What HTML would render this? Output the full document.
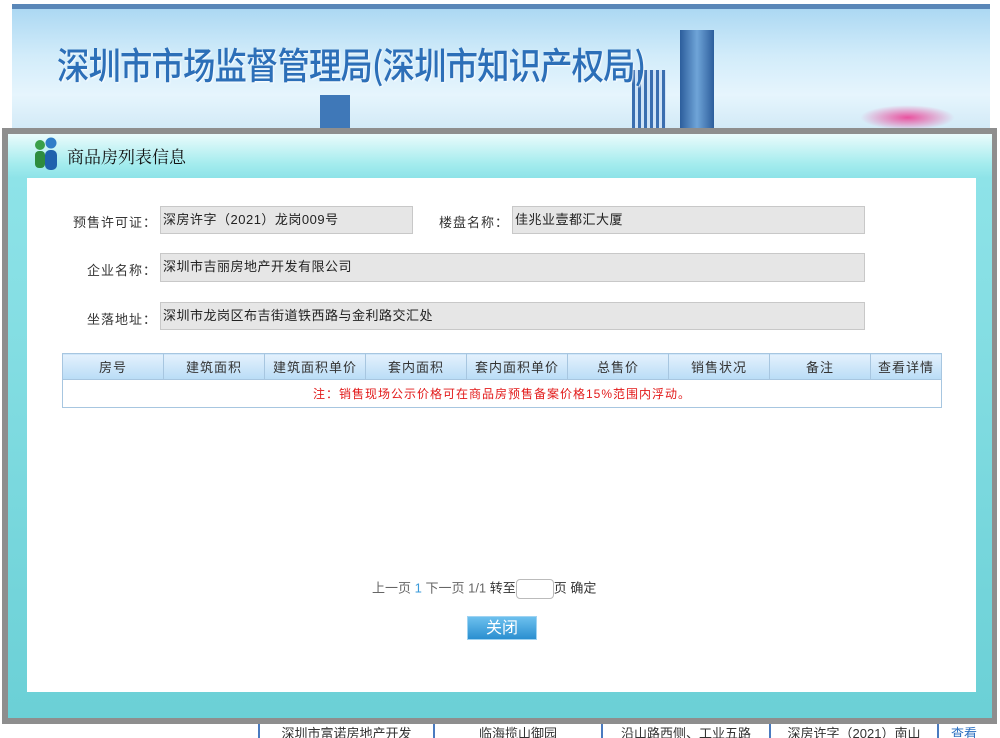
<!DOCTYPE html>
<html><head><meta charset="utf-8"><style>
*{margin:0;padding:0;box-sizing:border-box}
body{width:1000px;height:738px;overflow:hidden;background:#fff;position:relative;font-family:"Liberation Sans","Noto Sans CJK SC",sans-serif;font-size:13px;color:#333}
.abs{position:absolute}
.banner{left:12px;top:4px;width:978px;height:130px;background:linear-gradient(#a8d6f2 0%,#d2ecfa 40%,#e6f5fd 70%,#cfe8f6 100%);}
.bar{left:12px;top:4px;width:978px;height:5px;background:#5a87b8}
.btitle{left:57px;top:36px;font-size:37px;color:#2c6fb8;letter-spacing:-1px;font-family:"Noto Sans CJK SC",sans-serif;text-shadow:1px 1px 2px #fff;font-weight:500;transform:scaleX(0.875);transform-origin:0 0;white-space:nowrap}
.modal{left:2px;top:128px;width:995px;height:596px;background:#8e8e8e}
.inner{left:8px;top:134px;width:984px;height:584px;background:linear-gradient(#eafbfc 0px,#a4ecee 30px,#8ee3e8 44px,#6bd0d6 100%)}
.content{left:27px;top:178px;width:949px;height:514px;background:#fff}
.lbl{font-size:13px;color:#333;text-align:right;width:104px;letter-spacing:1px}
.inp{background:#e6e6e6;border:1px solid #c8c8c8;height:28px;line-height:26px;padding-left:2px;font-size:13px;color:#222;letter-spacing:0.5px}
table{border-collapse:collapse;position:absolute;left:62px;top:353px;width:880px}
th{height:26px;font-weight:normal;color:#333;font-size:13px;background:linear-gradient(#e4f1fd,#b9dcf6);border:1px solid #a7c6e0;letter-spacing:1px}
td{height:28px;border:1px solid #a7c6e0;text-align:center;color:#e21a1a;font-size:12px;letter-spacing:1px}
.foot{left:258px;top:724px;height:14px;width:740px;border-left:2px solid #4a7bc0;font-size:13px;overflow:hidden;line-height:20px;color:#333}
</style></head><body>
<div class="abs banner"></div>
<div class="abs bar"></div>
<div class="abs" style="left:680px;top:30px;width:34px;height:100px;background:linear-gradient(90deg,#2c5e9c,#6fa4d8,#2c5e9c)"></div>
<div class="abs" style="left:632px;top:70px;width:34px;height:60px;background:repeating-linear-gradient(90deg,#3a6eb0 0 3px,#cfe3f7 3px 6px)"></div>
<div class="abs" style="left:320px;top:95px;width:30px;height:35px;background:#3f78b8"></div>
<div class="abs" style="left:860px;top:105px;width:95px;height:25px;background:radial-gradient(ellipse at center,#e9529f,rgba(233,82,159,0) 70%)"></div>
<div class="abs btitle">深圳市市场监督管理局(深圳市知识产权局)</div>
<div class="abs modal"></div>
<div class="abs inner"></div>
<svg class="abs" style="left:32px;top:136px" width="30" height="36" viewBox="0 0 30 36"><circle cx="8" cy="9" r="5" fill="#3aa04a"/><rect x="3" y="15" width="10" height="17" rx="4" fill="#2e8c3e"/><circle cx="19" cy="7" r="5.5" fill="#2f7dc8"/><rect x="13" y="14" width="12" height="20" rx="5" fill="#1f62ad"/></svg>
<div class="abs" style="left:67px;top:143px;font-size:17px;color:#111;font-family:'Noto Serif CJK SC',serif">商品房列表信息</div>
<div class="abs content"></div>
<div class="abs lbl" style="left:53px;top:212px">预售许可证：</div>
<div class="abs inp" style="left:160px;top:206px;width:253px">深房许字（2021）龙岗009号</div>
<div class="abs lbl" style="left:405px;top:212px">楼盘名称：</div>
<div class="abs inp" style="left:512px;top:206px;width:353px">佳兆业壹都汇大厦</div>
<div class="abs lbl" style="left:53px;top:260px">企业名称：</div>
<div class="abs inp" style="left:160px;top:253px;width:705px;height:29px">深圳市吉丽房地产开发有限公司</div>
<div class="abs lbl" style="left:53px;top:309px">坐落地址：</div>
<div class="abs inp" style="left:160px;top:302px;width:705px">深圳市龙岗区布吉街道铁西路与金利路交汇处</div>
<table><tr><th style="width:101px">房号</th><th style="width:101px">建筑面积</th><th style="width:101px">建筑面积单价</th><th style="width:101px">套内面积</th><th style="width:101px">套内面积单价</th><th style="width:101px">总售价</th><th style="width:101px">销售状况</th><th style="width:101px">备注</th><th>查看详情</th></tr>
<tr><td colspan="9">注：销售现场公示价格可在商品房预售备案价格15%范围内浮动。</td></tr></table>
<div class="abs" style="left:372px;top:579px;font-size:13px;color:#666;line-height:18px">上一页 <span style="color:#3a9ad9">1</span> 下一页 1/1 <span style="color:#333">转至</span><span style="display:inline-block;width:38px;height:20px;border:1px solid #bbb;border-radius:4px;vertical-align:middle"></span><span style="color:#333">页 确定</span></div>
<div class="abs" style="left:467px;top:616px;width:70px;height:24px;background:linear-gradient(#6cc0ee,#2a8fd0);color:#fff;font-size:16px;text-align:center;line-height:24px;border:1px solid #9fd3f2">关闭</div>
<div class="abs foot"><span style="display:inline-block;width:175px;text-align:center;border-right:2px solid #4a7bc0">深圳市富诺房地产开发</span><span style="display:inline-block;width:168px;text-align:center;border-right:2px solid #4a7bc0">临海揽山御园</span><span style="display:inline-block;width:168px;text-align:center;border-right:2px solid #4a7bc0">沿山路西侧、工业五路</span><span style="display:inline-block;width:168px;text-align:center;border-right:2px solid #4a7bc0">深房许字（2021）南山</span><span style="display:inline-block;width:50px;text-align:center;color:#2b6fc0">查看</span></div>
</body></html>
